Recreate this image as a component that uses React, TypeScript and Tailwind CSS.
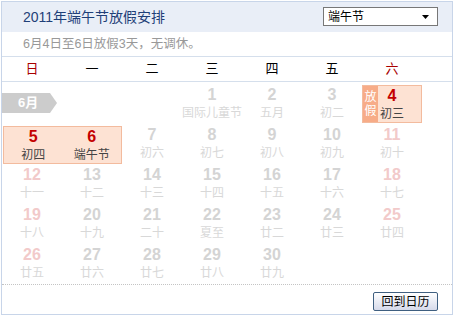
import React from "react";

type Day = { d?: number; l?: string; we?: boolean };

const font = "font-['Liberation_Sans','Noto_Sans_CJK_SC',sans-serif]";

function Cell({ d, l, we }: Day) {
  if (!d) return <div className="h-[40px]" />;
  return (
    <div className="h-[40px] flex flex-col items-center pt-[2px]">
      <div className={`text-[16px] leading-[18px] font-bold ${we ? "text-[#f2caca]" : "text-[#d4d4d4]"}`}>{d}</div>
      <div className="mt-[2px] text-[12px] leading-[14px] text-[#d8d8d8] whitespace-nowrap">{l}</div>
    </div>
  );
}

function HiCell({ d, l }: { d: number; l: string }) {
  return (
    <div className="h-[38px] flex flex-col items-center pt-[1px]">
      <div className="text-[16px] leading-[18px] font-bold text-[#c40000]">{d}</div>
      <div className="mt-[2px] text-[12px] leading-[14px] text-[#444]">{l}</div>
    </div>
  );
}

export default function App() {
  const rows: Day[][] = [
    [
      { d: 12, l: "十一", we: true }, { d: 13, l: "十二" }, { d: 14, l: "十三" }, { d: 15, l: "十四" },
      { d: 16, l: "十五" }, { d: 17, l: "十六" }, { d: 18, l: "十七", we: true },
    ],
    [
      { d: 19, l: "十八", we: true }, { d: 20, l: "十九" }, { d: 21, l: "二十" }, { d: 22, l: "夏至" },
      { d: 23, l: "廿二" }, { d: 24, l: "廿三" }, { d: 25, l: "廿四", we: true },
    ],
    [
      { d: 26, l: "廿五", we: true }, { d: 27, l: "廿六" }, { d: 28, l: "廿七" }, { d: 29, l: "廿八" },
      { d: 30, l: "廿九" }, {}, {},
    ],
  ];
  const week = ["日", "一", "二", "三", "四", "五", "六"];
  return (
    <div className={`${font} bg-white w-[455px] h-[317px] pt-[1px] pl-[1px]`}>
      <div className="w-[452px] h-[314px] border border-[#c8d5e9] flex flex-col">
        <div className="h-[30px] bg-[#e9eef7] flex items-center justify-between pl-[21px] pr-[14px]">
          <div className="text-[14px] text-[#1f3f78]">2011年端午节放假安排</div>
          <div className="w-[115px] h-[19px] border border-[#777] bg-white flex items-center justify-between pl-[4px] pr-[8px] mt-[-1px]">
            <span className="text-[12px] leading-[14px] text-black">端午节</span>
            <svg width="7" height="4" viewBox="0 0 7 4"><path d="M0 0h7L3.5 4z" fill="#000" /></svg>
          </div>
        </div>
        <div className="h-[25px] border-b border-[#d5dfec] flex items-center pl-[21px] text-[12.5px] text-[#999]">
          6月4日至6日放假3天，无调休。
        </div>
        <div className="h-[25px] border-b border-[#d5dfec] grid grid-cols-[repeat(7,60px)] items-center text-[13px]">
          {week.map((w, i) => (
            <div key={w} className={`text-center ${i === 0 || i === 6 ? "text-[#a80000]" : "text-black"}`}>{w}</div>
          ))}
        </div>
        <div className="pt-[2px] grid grid-cols-[repeat(7,60px)]">
          {/* row 1 */}
          <div className="col-span-3 h-[40px] pt-[9px]">
            <div className="w-[55px] h-[20px] bg-[#cccccc] [clip-path:polygon(0_0,48px_0,55px_50%,48px_100%,0_100%)] text-white font-bold text-[13px] leading-[20px] pl-[16px]">
              6月
            </div>
          </div>
          <Cell d={1} l="国际儿童节" />
          <Cell d={2} l="五月" />
          <Cell d={3} l="初二" />
          <div className="h-[40px] pt-[1px]">
            <div className="relative h-[38px] bg-[#fde2d3] border border-[#f3bb9e]">
              <div className="absolute left-0 top-0 bottom-0 w-[15px] bg-[#f7ac88] text-white text-[12px] leading-[14px] flex flex-col items-center justify-center">
                <span>放</span>
                <span>假</span>
              </div>
              <HiCell d={4} l="初三" />
            </div>
          </div>
          {/* row 2 */}
          <div className="col-span-2 h-[40px] pt-[2px] pl-[1px]">
            <div className="h-[38px] bg-[#fde2d3] border border-[#f3bb9e] grid grid-cols-2">
              <HiCell d={5} l="初四" />
              <HiCell d={6} l="端午节" />
            </div>
          </div>
          <Cell d={7} l="初六" />
          <Cell d={8} l="初七" />
          <Cell d={9} l="初八" />
          <Cell d={10} l="初九" />
          <Cell d={11} l="初十" we />
          {rows.flat().map((c, i) => (
            <Cell key={i} {...c} />
          ))}
        </div>
        <div className="border-t border-dotted border-[#c4c4c4] flex-1 flex justify-end items-start pt-[7px] pr-[14px]">
          <div className="w-[65px] h-[19px] border border-[#3f5f80] rounded-[2px] bg-gradient-to-b from-white to-[#d6daea] flex items-center justify-center text-[12px] leading-[14px] text-black">
            回到日历
          </div>
        </div>
      </div>
    </div>
  );
}
